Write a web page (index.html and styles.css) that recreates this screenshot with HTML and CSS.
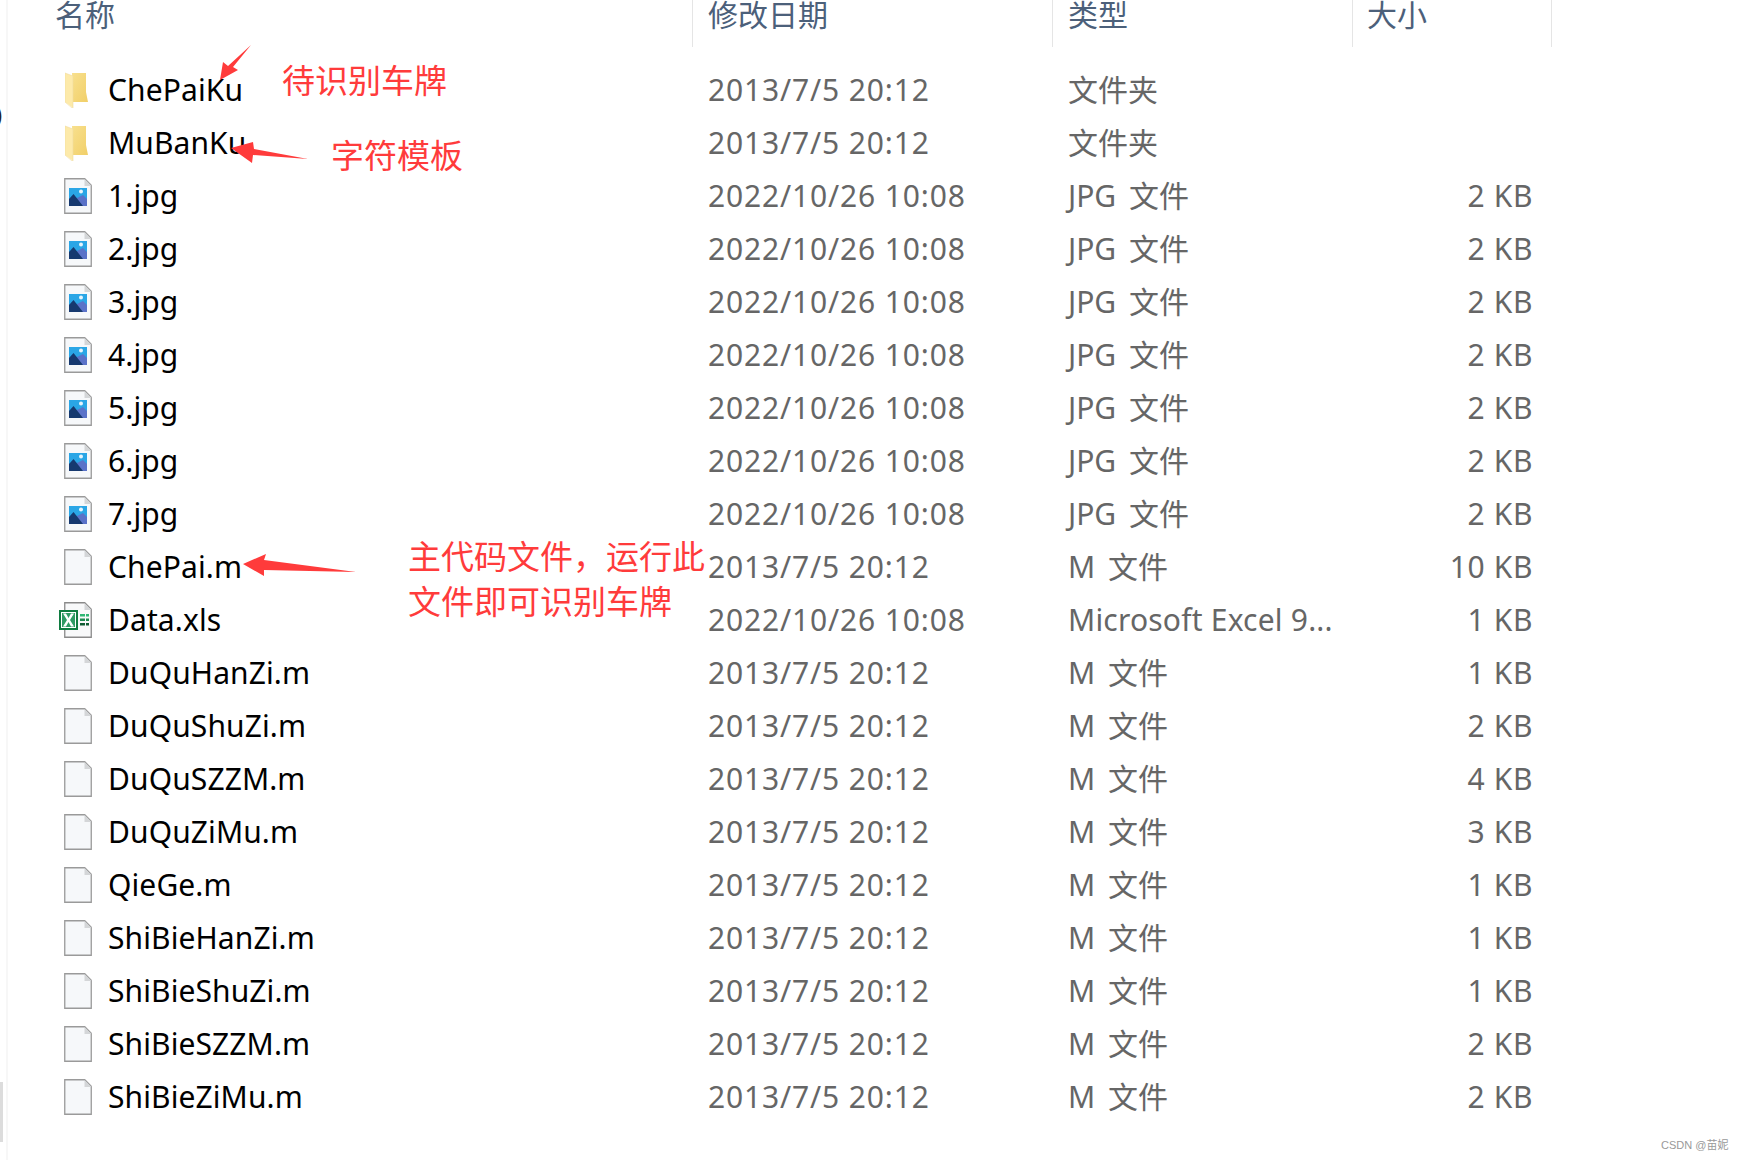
FILE: index.html
```html
<!DOCTYPE html>
<html lang="zh-CN">
<head>
    <meta charset="UTF-8">
    <title>ChePai</title>
    <link rel="stylesheet" href="styles.css">
</head>
<body>
    <!-- Icons -->
    <svg class="defs" width="0" height="0">
        <defs>
            <linearGradient id="folder-back" x1="0" y1="0" x2="1" y2="1">
                <stop offset="0" stop-color="#f8e08e"/>
                <stop offset="1" stop-color="#f1cf68"/>
            </linearGradient>
        </defs>
        <symbol id="folder" viewBox="0 0 24 36">
            <path d="M7 1h14v19l2 10H8z" fill="url(#folder-back)"/>
            <path d="M0 1l8 3v32l-8-6z" fill="#fdeaaa"/>
            <path d="M0 1l8 3v32l-1 0-7-6z" fill="none" stroke="#f0dca0" stroke-width=".6"/>
        </symbol>
        <symbol id="file" viewBox="0 0 28 36">
            <path d="M.75.75h20l6.500 6.500v28h-26.500z" fill="#f6f8fa" stroke="#9a9a9a" stroke-width="1.3"/>
            <path d="M20.500 1v7h7z" fill="#d4d6d8"/>
        </symbol>
        <symbol id="image" viewBox="0 0 28 36">
            <use href="#file"/>
            <rect x="5" y="10" width="18" height="18" fill="#2aa6e6"/>
            <circle cx="17" cy="13.500" r="2" fill="#e6f4fc"/>
            <path d="M11 21l8-4 4 4v7H11z" fill="#5a72c8"/>
            <path d="M5 28v-7l4.500-5 9.500 12z" fill="#16396f"/>
        </symbol>
        <symbol id="excel" viewBox="0 0 33 36">
            <path d="M5.750.75h20l6.500 6.500v28h-26.500z" fill="#f8f9fa" stroke="#8a8a8a" stroke-width="1.3"/>
            <path d="M25.500 1v7h7z" fill="#d4d6d8"/>
            <rect x="21" y="12" width="5" height="2.500" fill="#2fb673"/>
            <rect x="27" y="12" width="3" height="2.500" fill="#2fb673"/>
            <rect x="21" y="16.500" width="5" height="2.500" fill="#1c8a50"/>
            <rect x="27" y="16.500" width="3" height="2.500" fill="#1c8a50"/>
            <rect x="21" y="21" width="5" height="2.500" fill="#0f5c33"/>
            <rect x="27" y="21" width="3" height="2.500" fill="#0f5c33"/>
            <rect x="1" y="9" width="17" height="18" fill="#fff" stroke="#107c41" stroke-width="2"/>
            <rect x="3" y="11" width="13" height="14" fill="#2f9a64"/>
            <path d="M4 11.500h3l2.500 4.500 2.500-4.500h3l-4 6.500 4 6.500h-3l-2.500-4.500-2.500 4.500h-3l4-6.500z" fill="#fff"/>
        </symbol>
    </svg>

    <div class="window">
        <div class="side">
            <span class="side-text">)</span>
            <div class="side-thumb"></div>
        </div>

        <div class="list">
            <div class="row head">
                <div class="cell">名称</div>
                <div class="cell">修改日期</div>
                <div class="cell">类型</div>
                <div class="cell">大小</div>
            </div>

            <div class="rows">
                <div class="row"><div class="cell name"><svg class="ico ico-folder"><use href="#folder"/></svg>ChePaiKu</div><div class="cell date">2013/7/5 20:12</div><div class="cell type">文件夹</div><div class="cell size"></div></div>
                <div class="row"><div class="cell name"><svg class="ico ico-folder"><use href="#folder"/></svg>MuBanKu</div><div class="cell date">2013/7/5 20:12</div><div class="cell type">文件夹</div><div class="cell size"></div></div>
                <div class="row"><div class="cell name"><svg class="ico"><use href="#image"/></svg>1.jpg</div><div class="cell date">2022/10/26 10:08</div><div class="cell type">JPG 文件</div><div class="cell size">2 KB</div></div>
                <div class="row"><div class="cell name"><svg class="ico"><use href="#image"/></svg>2.jpg</div><div class="cell date">2022/10/26 10:08</div><div class="cell type">JPG 文件</div><div class="cell size">2 KB</div></div>
                <div class="row"><div class="cell name"><svg class="ico"><use href="#image"/></svg>3.jpg</div><div class="cell date">2022/10/26 10:08</div><div class="cell type">JPG 文件</div><div class="cell size">2 KB</div></div>
                <div class="row"><div class="cell name"><svg class="ico"><use href="#image"/></svg>4.jpg</div><div class="cell date">2022/10/26 10:08</div><div class="cell type">JPG 文件</div><div class="cell size">2 KB</div></div>
                <div class="row"><div class="cell name"><svg class="ico"><use href="#image"/></svg>5.jpg</div><div class="cell date">2022/10/26 10:08</div><div class="cell type">JPG 文件</div><div class="cell size">2 KB</div></div>
                <div class="row"><div class="cell name"><svg class="ico"><use href="#image"/></svg>6.jpg</div><div class="cell date">2022/10/26 10:08</div><div class="cell type">JPG 文件</div><div class="cell size">2 KB</div></div>
                <div class="row"><div class="cell name"><svg class="ico"><use href="#image"/></svg>7.jpg</div><div class="cell date">2022/10/26 10:08</div><div class="cell type">JPG 文件</div><div class="cell size">2 KB</div></div>
                <div class="row"><div class="cell name"><svg class="ico"><use href="#file"/></svg>ChePai.m</div><div class="cell date">2013/7/5 20:12</div><div class="cell type">M 文件</div><div class="cell size">10 KB</div></div>
                <div class="row"><div class="cell name"><svg class="ico ico-excel"><use href="#excel"/></svg>Data.xls</div><div class="cell date">2022/10/26 10:08</div><div class="cell type-latin">Microsoft Excel 9...</div><div class="cell size">1 KB</div></div>
                <div class="row"><div class="cell name"><svg class="ico"><use href="#file"/></svg>DuQuHanZi.m</div><div class="cell date">2013/7/5 20:12</div><div class="cell type">M 文件</div><div class="cell size">1 KB</div></div>
                <div class="row"><div class="cell name"><svg class="ico"><use href="#file"/></svg>DuQuShuZi.m</div><div class="cell date">2013/7/5 20:12</div><div class="cell type">M 文件</div><div class="cell size">2 KB</div></div>
                <div class="row"><div class="cell name"><svg class="ico"><use href="#file"/></svg>DuQuSZZM.m</div><div class="cell date">2013/7/5 20:12</div><div class="cell type">M 文件</div><div class="cell size">4 KB</div></div>
                <div class="row"><div class="cell name"><svg class="ico"><use href="#file"/></svg>DuQuZiMu.m</div><div class="cell date">2013/7/5 20:12</div><div class="cell type">M 文件</div><div class="cell size">3 KB</div></div>
                <div class="row"><div class="cell name"><svg class="ico"><use href="#file"/></svg>QieGe.m</div><div class="cell date">2013/7/5 20:12</div><div class="cell type">M 文件</div><div class="cell size">1 KB</div></div>
                <div class="row"><div class="cell name"><svg class="ico"><use href="#file"/></svg>ShiBieHanZi.m</div><div class="cell date">2013/7/5 20:12</div><div class="cell type">M 文件</div><div class="cell size">1 KB</div></div>
                <div class="row"><div class="cell name"><svg class="ico"><use href="#file"/></svg>ShiBieShuZi.m</div><div class="cell date">2013/7/5 20:12</div><div class="cell type">M 文件</div><div class="cell size">1 KB</div></div>
                <div class="row"><div class="cell name"><svg class="ico"><use href="#file"/></svg>ShiBieSZZM.m</div><div class="cell date">2013/7/5 20:12</div><div class="cell type">M 文件</div><div class="cell size">2 KB</div></div>
                <div class="row"><div class="cell name"><svg class="ico"><use href="#file"/></svg>ShiBieZiMu.m</div><div class="cell date">2013/7/5 20:12</div><div class="cell type">M 文件</div><div class="cell size">2 KB</div></div>
            </div>
        </div>
    </div>

    <!-- Rode aantekeningen bovenop de lijst -->
    <svg class="arrows" viewBox="0 0 1744 1160">
        <polygon points="251,45 233,67 238,70 220,80 223,62 228,66"/>
        <polygon points="231,148 253,142 254,149 308,159 253,155 252,163"/>
        <polygon points="243,564 266,554 264,560 356,572 264,570 264,576"/>
    </svg>
    <div class="note note-a">待识别车牌</div>
    <div class="note note-b">字符模板</div>
    <div class="note note-c">主代码文件，运行此<br>文件即可识别车牌</div>

    <div class="mark">CSDN @苗妮</div>
</body>
</html>
```

FILE: styles.css
```css
html, body {
    height: 100%;
}
body {
    margin: 0;
    background: #ffffff;
    overflow: hidden;
    position: relative;
    font-family: "Noto Sans", "Noto Sans CJK SC", sans-serif;
    font-size: 30px;
    color: #666666;
}
.defs {
    position: absolute;
}
.window {
    display: flex;
    height: 100%;
}
.side {
    width: 6px;
    display: flex;
    flex-direction: column;
    overflow: hidden;
}
.side-text {
    margin: 96px 0 0 -5px;
    line-height: 36px;
    font-size: 24px;
    color: #222222;
}
.side-thumb {
    margin-top: auto;
    margin-bottom: 18px;
    width: 3px;
    height: 60px;
    background: #dcdcdc;
}
.list {
    flex: 1;
    border-left: 2px solid #f7f7f7;
}
.row {
    display: grid;
    grid-template-columns: 684px 360px 300px 200px;
    height: 53px;
    align-items: center;
}
.cell {
    padding-left: 15px;
    white-space: nowrap;
}
.head {
    height: 47px;
    align-items: start;
    color: #4c607a;
}
.head .cell {
    height: 47px;
    line-height: 30px;
    box-sizing: border-box;
    border-left: 1px solid #e5e5e5;
}
.head .cell:first-child {
    padding-left: 47px;
    border-left: none;
}
.head .cell:last-child {
    padding-left: 14px;
    border-right: 1px solid #e5e5e5;
}
.rows {
    padding-top: 16px;
}
.name {
    display: flex;
    align-items: center;
    padding-left: 56px;
    color: #000000;
    letter-spacing: 0.1px;
}
.date {
    padding-left: 16px;
    letter-spacing: 0.85px;
}
.type {
    padding: 0 0 4px 16px;
    word-spacing: 5px;
}
.type-latin {
    padding-left: 16px;
    white-space: nowrap;
    letter-spacing: 0.2px;
}
.size {
    padding: 0 19px 0 0;
    text-align: right;
    letter-spacing: 0.6px;
}
.ico {
    flex: none;
    width: 28px;
    height: 36px;
    margin-right: 16px;
}
.ico-folder {
    width: 24px;
    margin: 0 19px 0 1px;
}
.ico-excel {
    width: 33px;
    margin-left: -5px;
}
.arrows {
    position: absolute;
    top: 0;
    left: 0;
    width: 1744px;
    height: 1160px;
    fill: #ff3b3b;
}
.note {
    position: absolute;
    font-size: 33px;
    line-height: 45px;
    color: #ff3b3b;
    white-space: nowrap;
}
.note-a {
    top: 58px;
    left: 282px;
}
.note-b {
    top: 133px;
    left: 331px;
}
.note-c {
    top: 534px;
    left: 408px;
}
.mark {
    position: absolute;
    top: 1137px;
    left: 1661px;
    font-family: "Liberation Sans", "Noto Sans CJK SC", sans-serif;
    font-size: 11px;
    line-height: 16px;
    color: #999999;
}
```
